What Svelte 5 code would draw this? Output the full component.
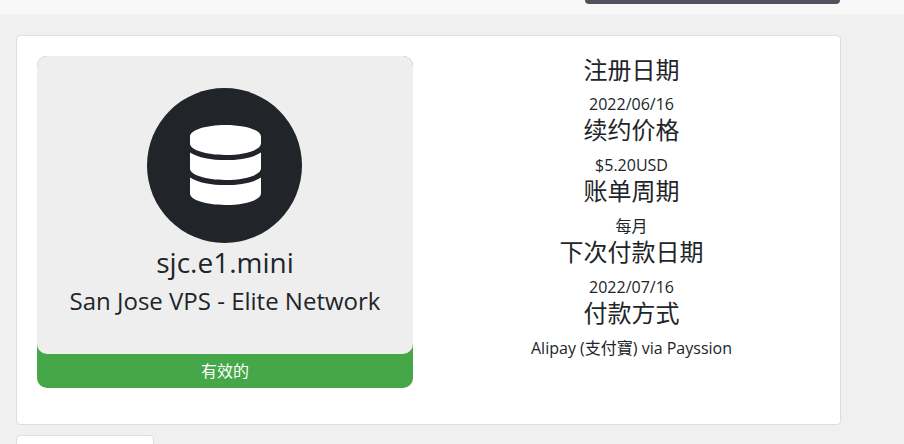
<script>
	const details = [
		{ label: '注册日期', value: '2022/06/16' },
		{ label: '续约价格', value: '$5.20USD' },
		{ label: '账单周期', value: '每月' },
		{ label: '下次付款日期', value: '2022/07/16' },
		{ label: '付款方式', value: 'Alipay (支付寶) via Payssion' }
	];
</script>

<div class="topbar">
	<div class="topbar-button"></div>
</div>

<main class="content">
	<section class="card product">
		<div class="status-box">
			<div class="product-box">
				<div class="icon-circle">
					<svg viewBox="0 0 448 512" width="71" height="80" preserveAspectRatio="none" aria-hidden="true">
						<path
							fill="#fff"
							d="M448 73.143v45.714C448 159.143 347.667 192 224 192S0 159.143 0 118.857V73.143C0 32.857 100.333 0 224 0s224 32.857 224 73.143zM448 176v102.857C448 319.143 347.667 352 224 352S0 319.143 0 278.857V176c48.125 33.143 136.208 48.572 224 48.572S399.874 209.143 448 176zm0 160v102.857C448 479.143 347.667 512 224 512S0 479.143 0 438.857V336c48.125 33.143 136.208 48.572 224 48.572S399.874 369.143 448 336z"
						/>
					</svg>
				</div>
				<h3>sjc.e1.mini</h3>
				<h4>San Jose VPS - Elite Network</h4>
			</div>
			<div class="status">有效的</div>
		</div>

		<div class="details">
			{#each details as row}
				<h4>{row.label}</h4>
				<p>{row.value}</p>
			{/each}
		</div>
	</section>

	<section class="card stub"></section>
</main>

<style>
	:global(body) {
		margin: 0;
		overflow: hidden;
		background: #f0f0f0;
	}

	h3,
	h4,
	p {
		margin: 0;
		font-weight: 400;
	}

	.topbar {
		height: 14px;
		padding-right: 64px;
		display: flex;
		justify-content: flex-end;
		background: #f8f8f8;
	}

	.topbar-button {
		width: 255px;
		height: 4px;
		background: #52535f;
		border-radius: 0 0 4px 4px;
	}

	.content {
		width: 825px;
		margin-left: 16px;
		padding-top: 21px;
		font-family: 'Open Sans', 'Noto Sans CJK SC', sans-serif;
		font-size: 16px;
		line-height: 1.5;
		color: #212529;
	}

	.card {
		box-sizing: border-box;
		background: #fff;
		border: 1px solid #ddd;
		border-radius: 4px;
	}

	.product {
		height: 390px;
		padding: 20px;
		display: flex;
		margin-bottom: 10px;
	}

	.stub {
		width: 138px;
		height: 40px;
	}

	.status-box {
		width: 376px;
		height: 332px;
		flex: none;
		background: #46a748;
		border-radius: 10px;
		color: #fff;
		text-align: center;
	}

	.product-box {
		box-sizing: border-box;
		height: 298px;
		padding-top: 32px;
		background: #eee;
		border-radius: 10px;
		color: #212529;
	}

	.icon-circle {
		width: 155px;
		height: 155px;
		margin-left: 110px;
		display: flex;
		align-items: center;
		justify-content: center;
		background: #212529;
		border-radius: 50%;
	}

	.icon-circle svg {
		margin: 0 0 1px 2px;
	}

	.product-box h3 {
		font-size: 28px;
		line-height: 1.2;
		margin-bottom: 7px;
		margin-top: 3px;
	}

	.product-box h4 {
		font-size: 24px;
		line-height: 1.2;
	}

	.status {
		padding: 5px 0;
	}

	.details {
		flex: 1;
		margin-top: -0.4px;
		padding-left: 30px;
		text-align: center;
	}

	.details h4 {
		font-size: 24px;
		line-height: 1.2;
		margin-bottom: 8px;
	}
</style>
